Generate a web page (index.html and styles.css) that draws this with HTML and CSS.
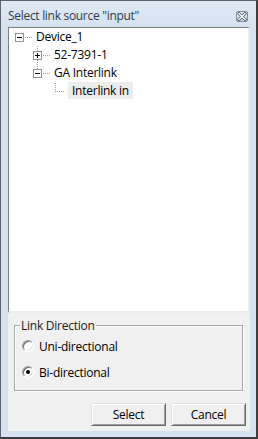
FILE: index.html
```html
<!DOCTYPE html>
<html>
<head>
<meta charset="utf-8">
<link rel="stylesheet" href="styles.css">
</head>
<body>
<div class="window">
  <div class="titlebar">
    <span class="title">Select link source "input"</span>
    <span class="close">
      <svg width="10" height="9" viewBox="0 0 10 9">
        <path d="M2 1.5 L8 7.5 M8 1.5 L2 7.5" stroke="#4d5868" stroke-width="3" stroke-linecap="square"/>
        <path d="M2 1.5 L8 7.5 M8 1.5 L2 7.5" stroke="#ffffff" stroke-width="1.4" stroke-linecap="square"/>
      </svg>
    </span>
  </div>
  <div class="client">
    <div class="tree">
      <div class="row">
        <svg class="cell" width="22" height="18" viewBox="0 0 22 18">
          <line x1="15" y1="9.5" x2="22" y2="9.5" class="dots"/>
          <rect x="5.5" y="5.5" width="8" height="8" class="box"/>
          <line x1="7" y1="9.5" x2="12" y2="9.5" class="sign"/>
        </svg>
        <span class="label">Device_1</span>
      </div>
      <div class="row lvl2">
        <svg class="cell" width="22" height="18" viewBox="0 0 22 18">
          <line x1="9.5" y1="0" x2="9.5" y2="18" class="dots"/>
          <line x1="15" y1="9.5" x2="22" y2="9.5" class="dots"/>
          <rect x="5.5" y="5.5" width="8" height="8" class="box"/>
          <line x1="7" y1="9.5" x2="12" y2="9.5" class="sign"/>
          <line x1="9.5" y1="7" x2="9.5" y2="12" class="sign"/>
        </svg>
        <span class="label">52-7391-1</span>
      </div>
      <div class="row lvl2">
        <svg class="cell" width="22" height="18" viewBox="0 0 22 18">
          <line x1="9.5" y1="0" x2="9.5" y2="6" class="dots"/>
          <line x1="15" y1="9.5" x2="22" y2="9.5" class="dots"/>
          <rect x="5.5" y="5.5" width="8" height="8" class="box"/>
          <line x1="7" y1="9.5" x2="12" y2="9.5" class="sign"/>
        </svg>
        <span class="label">GA Interlink</span>
      </div>
      <div class="row lvl3">
        <svg class="cell" width="22" height="18" viewBox="0 0 22 18">
          <line x1="9.5" y1="1" x2="9.5" y2="10" class="dots"/>
          <line x1="9" y1="9.5" x2="18" y2="9.5" class="dots"/>
        </svg>
        <span class="label selected">Interlink in</span>
      </div>
    </div>
    <div class="group">
      <span class="group-title">Link Direction</span>
      <label class="radio"><span class="knob"></span>Uni-directional</label>
      <label class="radio checked"><span class="knob"></span>Bi-directional</label>
    </div>
    <div class="buttons">
      <button class="btn">Select</button>
      <button class="btn">Cancel</button>
    </div>
  </div>
</div>
</body>
</html>
```

FILE: styles.css
```css
* { box-sizing: border-box; }
html, body { margin: 0; padding: 0; background: #ffffff; }
body {
  font-family: "Open Sans", "Noto Sans", sans-serif;
  font-size: 12px;
  color: #000;
}
.window {
  width: 258px;
  height: 439px;
  border-style: solid;
  border-width: 1px 2px 2px 1px;
  border-color: #5c636d #3d3d3d #3d3d3d #5c636d;
  background: #d6e2f0;
  padding: 0 6px 6px 7px;
  display: flex;
  flex-direction: column;
}
.titlebar {
  height: 26px;
  flex: none;
  display: flex;
  align-items: flex-start;
  justify-content: space-between;
  margin: 0 -6px 0 -7px;
  padding: 7px 8px 0 7px;
  background: linear-gradient(#dfe9f5, #d6e2f0);
}
.title {
  line-height: 16px;
  color: #2f3a48;
  letter-spacing: -0.3px;
}
.close {
  width: 12px;
  height: 11px;
  margin-top: 3px;
  border: 1px solid #7d8ca3;
  border-radius: 2px;
  background: linear-gradient(#eef2f8, #c9d4e3);
  display: flex;
  align-items: center;
  justify-content: center;
}
.close svg { display: block; }
.client {
  flex: 1;
  background: #f0f0f0;
  display: flex;
  flex-direction: column;
}
.tree {
  height: 286px;
  flex: none;
  background: #fff;
  border-style: solid;
  border-width: 1px 2px 2px 1px;
  border-color: #7f7f7f #ececec #ececec #7f7f7f;
  padding-left: 1px;
}
.row {
  display: flex;
  height: 18px;
  align-items: flex-start;
}
.lvl2 { padding-left: 18px; }
.lvl3 { padding-left: 36px; }
.cell { display: block; flex: none; }
.dots { stroke: #a0a0a0; stroke-width: 1; stroke-dasharray: 1 1; }
.box { fill: #fff; stroke: #949494; stroke-width: 1; }
.sign { stroke: #000; stroke-width: 1; }
.label {
  line-height: 17px;
  height: 17px;
  padding: 0 4px;
  letter-spacing: -0.25px;
  white-space: nowrap;
}
.label.selected { background: #ececec; }
.group {
  margin: 12px 7px 0 6px;
  height: 66px;
  border: 1px solid #a8a8a8;
  box-shadow: inset 1px 1px #fff, 1px 1px #fff;
  display: flex;
  flex-direction: column;
  align-items: flex-start;
}
.group-title {
  margin: -8px 0 0 5px;
  padding: 0 1px;
  line-height: 16px;
  background: #f0f0f0;
  color: #1a1a1a;
  letter-spacing: -0.25px;
}
.radio {
  display: flex;
  align-items: center;
  height: 16px;
  margin-left: 7px;
  letter-spacing: -0.25px;
}
.radio + .radio { margin-top: 10px; }
.group-title + .radio { margin-top: 4px; }
.knob {
  width: 12px;
  height: 12px;
  margin-right: 5px;
  border-radius: 50%;
  border: 1px solid;
  border-color: #a0a0a0 #ffffff #ffffff #a0a0a0;
  box-shadow: inset 1px 1px #696969, inset -1px -1px #e3e3e3;
  background: #fff;
  display: flex;
  align-items: center;
  justify-content: center;
}
.checked .knob::after {
  content: "";
  width: 4px;
  height: 4px;
  border-radius: 50%;
  background: #000;
}
.buttons {
  display: flex;
  justify-content: flex-end;
  gap: 5px;
  padding: 0 4px 0 0;
  margin-top: 12px;
}
.btn {
  width: 75px;
  height: 23px;
  font: inherit;
  letter-spacing: -0.25px;
  color: #000;
  background: #f0f0f0;
  border-style: solid;
  border-width: 1px;
  border-color: #e3e3e3 #696969 #696969 #e3e3e3;
  box-shadow: inset 1px 1px #fff, inset -1px -1px #a0a0a0;
  padding: 0;
  margin: 0;
}
```
